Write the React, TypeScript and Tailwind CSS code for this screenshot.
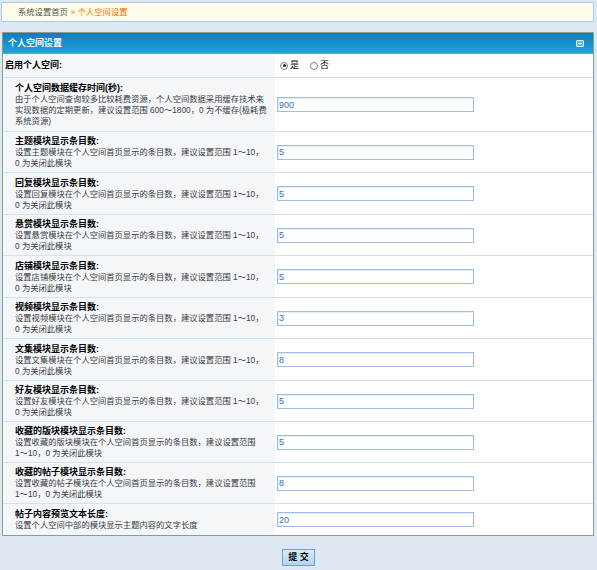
import React from "react";

type Row = {
  h: string;
  title: string;
  lines: string[];
  value: string;
};

const rows: Row[] = [
  {
    h: "h-[54px]",
    title: "个人空间数据缓存时间(秒):",
    lines: [
      "由于个人空间查询较多比较耗费资源，个人空间数据采用缓存技术来",
      "实现数据的定期更新，建议设置范围 600～1800，0 为不缓存(极耗费",
      "系统资源)",
    ],
    value: "900",
  },
  { h: "h-[41px]", title: "主题模块显示条目数:", lines: ["设置主题模块在个人空间首页显示的条目数，建议设置范围 1～10，", "0 为关闭此模块"], value: "5" },
  { h: "h-[42px]", title: "回复模块显示条目数:", lines: ["设置回复模块在个人空间首页显示的条目数，建议设置范围 1～10，", "0 为关闭此模块"], value: "5" },
  { h: "h-[41px]", title: "悬赏模块显示条目数:", lines: ["设置悬赏模块在个人空间首页显示的条目数，建议设置范围 1～10，", "0 为关闭此模块"], value: "5" },
  { h: "h-[42px]", title: "店铺模块显示条目数:", lines: ["设置店铺模块在个人空间首页显示的条目数，建议设置范围 1～10，", "0 为关闭此模块"], value: "5" },
  { h: "h-[41px]", title: "视频模块显示条目数:", lines: ["设置视频模块在个人空间首页显示的条目数，建议设置范围 1～10，", "0 为关闭此模块"], value: "3" },
  { h: "h-[42px]", title: "文集模块显示条目数:", lines: ["设置文集模块在个人空间首页显示的条目数，建议设置范围 1～10，", "0 为关闭此模块"], value: "8" },
  { h: "h-[41px]", title: "好友模块显示条目数:", lines: ["设置好友模块在个人空间首页显示的条目数，建议设置范围 1～10，", "0 为关闭此模块"], value: "5" },
  { h: "h-[41px]", title: "收藏的版块模块显示条目数:", lines: ["设置收藏的版块模块在个人空间首页显示的条目数，建议设置范围", "1～10，0 为关闭此模块"], value: "5" },
  { h: "h-[41px]", title: "收藏的帖子模块显示条目数:", lines: ["设置收藏的帖子模块在个人空间首页显示的条目数，建议设置范围", "1～10，0 为关闭此模块"], value: "8" },
  { h: "h-[31px] border-b-0", title: "帖子内容预览文本长度:", lines: ["设置个人空间中部的模块显示主题内容的文字长度"], value: "20" },
];

function Radio({ checked }: { checked: boolean }) {
  return (
    <span className="inline-flex items-center justify-center w-[8px] h-[8px] rounded-full border border-[#7d7d7d] bg-white">
      {checked && <span className="w-[3px] h-[3px] rounded-full bg-[#222]" />}
    </span>
  );
}

export default function App() {
  return (
    <div
      className="w-[597px] h-[570px] bg-[#dde8f3] overflow-hidden"
      style={{ fontFamily: '"Liberation Sans", "Noto Sans CJK SC", sans-serif' }}
    >
      <div className="pt-[2px] pl-[1px] pr-[3px]">
        <div className="h-[20px] border border-[#a9cde9] bg-[#fcfde9] flex items-center pl-[16px] text-[8.3px] leading-none whitespace-nowrap">
          <span className="text-[#555]">系统设置首页</span>
          <span className="text-[#ff6a00] ml-[3px]">» 个人空间设置</span>
        </div>
      </div>

      <div className="mt-[10px] ml-[2px] mr-[3px] border border-[#8e9c8c] bg-white">
        <div className="h-[21px] bg-gradient-to-b from-[#137cb9] to-[#1ea3dc] border-b border-[#5aa9d1] flex items-center justify-between pl-[5px] pr-[9px]">
          <span className="text-white font-bold text-[9px] leading-none">个人空间设置</span>
          <span className="w-[8px] h-[7px] rounded-[1px] border border-[#d4effb] bg-[#5cbbe8] flex items-center justify-center">
            <span className="w-[4px] h-[1px] bg-[#eef9fe]" />
          </span>
        </div>

        <div className="flex h-[24px] border-b border-[#d3e2f0]">
          <div className="w-[272px] bg-[#f4f7fa] flex items-center pl-[2px]">
            <span className="font-bold text-[9px] text-black leading-none">启用个人空间:</span>
          </div>
          <div className="flex-1 flex items-center pl-[5px] text-[9px] leading-none text-black">
            <Radio checked />
            <span className="ml-[2px]">是</span>
            <span className="ml-[11px]" />
            <Radio checked={false} />
            <span className="ml-[2px]">否</span>
          </div>
        </div>

        {rows.map((r, i) => (
          <div key={i} className={`flex border-b border-[#d3e2f0] ${r.h}`}>
            <div className="w-[272px] bg-[#f4f7fa] flex flex-col justify-center pl-[12px] whitespace-nowrap">
              <div className="font-bold text-[9px] leading-[12px] text-black">{r.title}</div>
              {r.lines.map((l, j) => (
                <div key={j} className="text-[8.3px] leading-[10.8px] text-[#3a3a3a]">
                  {l}
                </div>
              ))}
            </div>
            <div className="flex-1 flex items-center pl-[2px]">
              <input
                readOnly
                value={r.value}
                className="w-[197px] h-[15px] border border-[#9dbde2] bg-white px-[1px] py-0 text-[9px] leading-none text-[#2f72b5] outline-none shadow-[inset_1px_1px_0_#e4eef9]"
              />
            </div>
          </div>
        ))}
      </div>

      <div className="flex justify-center mt-[13px]">
        <button className="w-[33px] h-[17px] border border-[#6f9fd2] bg-gradient-to-b from-[#dbecfa] to-[#b6d4ee] text-[9px] font-bold text-black leading-none flex items-center justify-center">
          提 交
        </button>
      </div>
    </div>
  );
}
